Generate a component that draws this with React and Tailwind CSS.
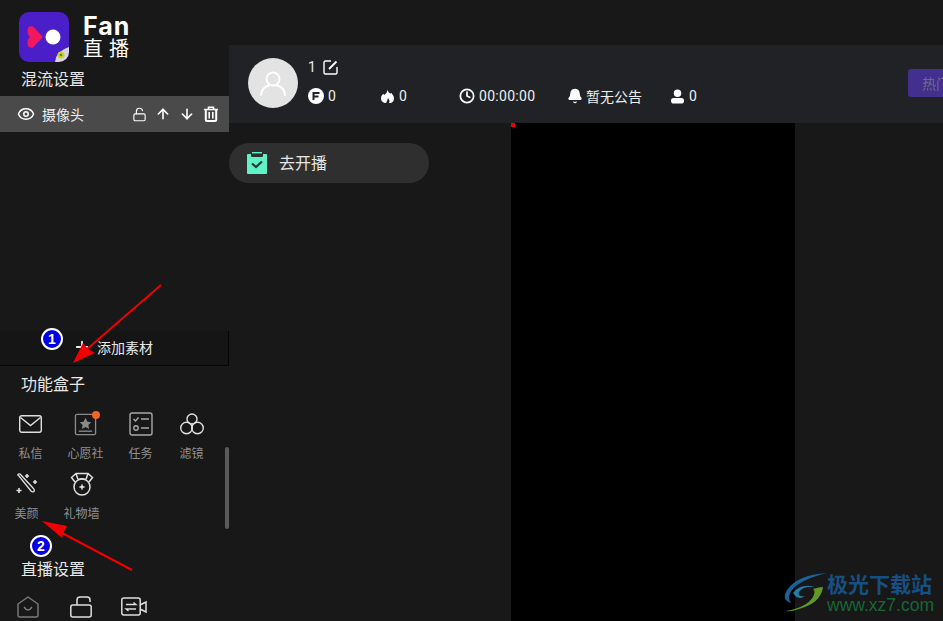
import React from 'react';
import { Eye, LockOpen, ArrowUp, ArrowDown, Clock, Bell, Plus } from 'lucide-react';

const cjk = 'font-["Noto_Sans_CJK_SC","Noto_Sans",sans-serif]';

function Logo() {
  return (
    <div className="flex items-center gap-[14px] pl-[19px] pt-[12px]">
      <div className="relative w-[50px] h-[50px] rounded-[10px] bg-[#4a1fc9] overflow-hidden">
        <svg viewBox="0 0 50 50" className="w-[50px] h-[50px]">
          <path d="M24 25 L14 35.5 Q8.5 37 8.5 31 Q8.5 27 11 25 Q8.5 23 8.5 19 Q8.5 13 14 14.5Z" fill="#f0195f" />
          <circle cx="34" cy="25" r="7.5" fill="#fff" />
          <path d="M36 50 Q37 39 50 35 V50Z" fill="#d8d4e6" />
          <circle cx="42" cy="43" r="3.5" fill="#d6d01c" />
          <circle cx="42" cy="43" r="1.3" fill="#1c9a6a" />
        </svg>
      </div>
      <div className="flex flex-col text-white">
        <span className="font-['Inter',sans-serif] font-bold text-[25px] leading-[22px] tracking-[1px]">Fan</span>
        <span className={`${cjk} text-[20px] leading-[22px] tracking-[6px] whitespace-nowrap`}>直播</span>
      </div>
    </div>
  );
}

function SectionTitle({ children, className = '' }) {
  return <div className={`${cjk} text-[16px] leading-[20px] text-[#e8e8e8] pl-[21px] ${className}`}>{children}</div>;
}

function BoxIcon({ label, children, dot, className = 'w-[55px]' }) {
  return (
    <div className={`relative flex flex-col items-center h-[60px] shrink-0 ${className}`}>
      <div className="h-[32px] w-[32px] flex items-center justify-center text-[#e0e0e0]">{children}</div>
      <span className={`${cjk} mt-[5px] text-[12px] leading-[16px] text-[#8f8f8f] whitespace-nowrap`}>{label}</span>
      {dot && <span className="absolute top-[3px] right-[13px] w-[8px] h-[8px] rounded-full bg-[#f2632b]" />}
    </div>
  );
}

function Sidebar() {
  return (
    <aside className="w-[229px] h-[621px] shrink-0 flex flex-col overflow-hidden relative">
      <Logo />
      <SectionTitle className="mt-[6px]">混流设置</SectionTitle>
      <div className="mt-[8px] h-[36px] shrink-0 bg-[#4a4a4a] flex items-center pl-[17px] pr-[10px] text-white">
        <Eye size={18} strokeWidth={2} />
        <span className={`${cjk} ml-[7px] text-[14px] text-[#eee]`}>摄像头</span>
        <div className="ml-auto flex items-center gap-[8px]">
          <LockOpen size={15} strokeWidth={1.8} />
          <ArrowUp size={16} strokeWidth={2.4} />
          <ArrowDown size={16} strokeWidth={2.4} />
          <svg viewBox="0 0 16 16" className="w-[16px] h-[16px]" fill="none" stroke="#fff">
            <path d="M1 3.5 H15 M5.5 3 V1.2 H10.5 V3" strokeWidth="1.6" />
            <path d="M2.8 4 V14 Q2.8 15 4 15 H12 Q13.2 15 13.2 14 V4" strokeWidth="2" />
            <path d="M6.2 6 V12.5 M9.8 6 V12.5" strokeWidth="1.6" />
          </svg>
        </div>
      </div>
      <div className="h-[199px] shrink-0" />
      <div className="h-[35px] shrink-0 bg-[#151515] border-r border-b border-[#050505] flex items-center pl-[73px] text-[#e8e8e8]">
        <Plus size={18} strokeWidth={2.4} className="-translate-y-[1px]" />
        <span className={`${cjk} ml-[6px] text-[14px] -translate-y-[1px]`}>添加素材</span>
      </div>
      <SectionTitle className="mt-[7px] shrink-0">功能盒子</SectionTitle>
      <div className="relative mt-[15px] h-[120px] shrink-0">
        <div className="flex pl-[3px]">
          <BoxIcon label="私信">
            <svg viewBox="0 0 23 18" className="w-[23px] h-[18px]" fill="none" stroke="currentColor" strokeWidth="1.4">
              <rect x="0.7" y="0.7" width="21.6" height="16.6" rx="2" />
              <path d="M1.5 2.5 L11.5 10.5 L21.5 2.5" />
            </svg>
          </BoxIcon>
          <BoxIcon label="心愿社" dot>
            <svg viewBox="0 0 24 24" className="w-[23px] h-[23px]" fill="none" stroke="#8a8a8a" strokeWidth="1.4">
              <rect x="1.5" y="1.5" width="21" height="21" rx="1.5" />
              <path d="M12 5 L14 9.2 L18 9.7 L15 12.6 L15.8 16.6 L12 14.7 L8.2 16.6 L9 12.6 L6 9.7 L10 9.2Z" fill="#8a8a8a" stroke="none" />
              <path d="M5 19 H19" />
            </svg>
          </BoxIcon>
          <BoxIcon label="任务">
            <svg viewBox="0 0 24 24" className="w-[24px] h-[24px]" fill="none" stroke="#a8a8a8" strokeWidth="1.4">
              <rect x="1" y="1" width="22" height="22" rx="2" />
              <path d="M4.5 7 L6.5 9 L9.5 5.5 M12 7 H20 M12 16 H20" />
              <circle cx="7" cy="16" r="2.2" />
            </svg>
          </BoxIcon>
          <BoxIcon label="滤镜" className="w-[47px]">
            <svg viewBox="0 0 24 22" className="w-[24px] h-[22px]" fill="none" stroke="currentColor" strokeWidth="1.4">
              <circle cx="12" cy="6" r="5" />
              <circle cx="6.5" cy="15" r="5.8" />
              <circle cx="17.5" cy="15" r="5.8" />
            </svg>
          </BoxIcon>
        </div>
        <div className="flex -ml-[1px]">
          <BoxIcon label="美颜">
            <svg viewBox="0 0 22 22" className="w-[22px] h-[22px]" fill="none" stroke="currentColor" strokeWidth="1.3">
              <path d="M3 3 Q1 1.5 2.5 1 Q4 0.5 5 2 L17 15 Q19 17 18 18.5 Q16.5 19.5 15 18 L3 3Z" />
              <path d="M11 1 v4 M9 3 h4 M19 7 v4 M17 9 h4 M3 15 v5 M0.5 17.5 h5" strokeWidth="1.6" />
            </svg>
          </BoxIcon>
          <BoxIcon label="礼物墙">
            <svg viewBox="0 0 24 24" className="w-[24px] h-[24px]" fill="none" stroke="currentColor" strokeWidth="1.5">
              <circle cx="12" cy="15" r="8" />
              <path d="M5 10 L1.5 5.5 L6 1.5 H18 L22.5 5.5 L19 10 M8 7.5 L6 1.5 M16 7.5 L18 1.5 M8.5 7.5 Q12 6 15.5 7.5" />
              <path d="M12 11.5 L13 14 L15.5 15 L13 16 L12 18.5 L11 16 L8.5 15 L11 14Z" fill="currentColor" stroke="none" />
            </svg>
          </BoxIcon>
        </div>
        <div className="absolute right-[0px] top-[39px] w-[4px] h-[82px] rounded-full bg-[#5a5a5a]" />
      </div>
      <SectionTitle className="mt-[30px] shrink-0">直播设置</SectionTitle>
      <div className="mt-[18px] flex pl-[17px] items-start text-[#dedede]">
        <svg viewBox="0 0 22 22" className="w-[22px] h-[22px] shrink-0" fill="none" stroke="#7c7c7c" strokeWidth="1.4">
          <path d="M1 8 L11 1 L21 8 V19 Q21 21 19 21 H3 Q1 21 1 19Z" />
          <path d="M7 11 Q11 17 15 11" />
        </svg>
        <svg viewBox="0 0 22 22" className="w-[22px] h-[22px] ml-[31px] shrink-0" fill="none" stroke="currentColor" strokeWidth="1.5">
          <rect x="0.8" y="9" width="20.4" height="12" rx="2" />
          <path d="M7 9 V4 Q7 1 10 1 H17 Q20 1 20 4 V6" />
        </svg>
        <svg viewBox="0 0 26 20" className="w-[26px] h-[20px] ml-[29px] mt-[1px] shrink-0" fill="none" stroke="currentColor" strokeWidth="1.5">
          <rect x="0.8" y="1" width="18.4" height="17" rx="2" />
          <path d="M19 8 L25 5 V15 L19 12" />
          <path d="M5 7.5 H15 L12.5 5.5 M15 12 H5 L7.5 14" strokeWidth="1.3" />
        </svg>
      </div>
    </aside>
  );
}

function Stat({ icon, value, className = '', valueClass = '' }) {
  return (
    <div className={`flex items-center shrink-0 ${className}`}>
      {icon}
      <span className={`font-['Roboto',sans-serif] text-[14px] leading-[16px] text-[#eee] ml-[4px] ${valueClass}`}>{value}</span>
    </div>
  );
}

function Header() {
  return (
    <header className="h-[78px] shrink-0 bg-[#212226] flex relative">
      <div className="ml-[19px] mt-[13px] w-[50px] h-[50px] rounded-full bg-[#e3e3e3] flex items-center justify-center">
        <svg viewBox="0 0 28 28" className="w-[28px] h-[28px]" fill="none" stroke="#fff" strokeWidth="2" strokeLinecap="round">
          <circle cx="14" cy="10" r="6.5" />
          <path d="M2 26 Q3 18 10 16.5 M26 26 Q25 18 18 16.5" />
        </svg>
      </div>
      <div className="ml-[10px] mt-[13px] flex flex-col">
        <div className="flex items-center h-[18px]">
          <span className="font-['Roboto',sans-serif] text-[14px] text-[#eee]">1</span>
          <svg viewBox="0 0 15 15" className="w-[15px] h-[15px] ml-[7px]" fill="none" stroke="#fff">
            <path d="M8 1 H2.5 Q1 1 1 2.5 V12.5 Q1 14 2.5 14 H12.5 Q14 14 14 12.5 V7" strokeWidth="1.4" />
            <path d="M6 9 L13.5 1.5" strokeWidth="1.8" />
          </svg>
        </div>
        <div className="flex items-center mt-[11px] h-[18px]">
          <Stat
            className="w-[72px]"
            value="0"
            icon={
              <span className="w-[16px] h-[16px] rounded-full bg-white flex items-center justify-center">
                <svg viewBox="0 0 10 10" className="w-[10px] h-[10px]">
                  <path d="M1.5 1 H8.5 V3 H3.5 V4.5 H7.5 V6.5 H3.5 V9 H1.5Z" fill="#212226" />
                </svg>
              </span>
            }
          />
          <Stat
            className="w-[79px]"
            value="0"
            icon={
              <svg viewBox="0 0 16 16" className="w-[15px] h-[15px]">
                <path d="M8 1 Q9 4 11 5 L12 4 Q15 7.5 15 10 Q14.5 15 9.5 15 Q11 12 8.5 9.5 Q8 12 6.5 15 Q1.5 14.5 1 10 Q1 7 3.5 5 L4.5 6.5 Q7.5 5 8 1Z" fill="#fff" />
              </svg>
            }
          />
          <Stat
            className="w-[108px]"
            value="00:00:00"
            valueClass="tracking-[0.3px]"
            icon={<Clock size={16} strokeWidth={2.6} className="text-white" />}
          />
          <div className="flex items-center w-[103px] shrink-0">
            <Bell size={16} fill="#fff" className="text-white" />
            <span className={`${cjk} ml-[3px] text-[14px] text-[#eee]`}>暂无公告</span>
          </div>
          <Stat
            value="0"
            icon={
              <svg viewBox="0 0 16 16" className="w-[15px] h-[15px]">
                <circle cx="8" cy="4.5" r="4" fill="#fff" />
                <rect x="1" y="9.5" width="14" height="6" rx="3" fill="#fff" />
              </svg>
            }
          />
        </div>
      </div>
      <div className="absolute left-[679px] top-[24px] w-[60px] h-[28px] rounded-l-[3px] bg-[#422f8e] flex items-center pl-[14px]">
        <span className={`${cjk} text-[14px] text-[#6f6a8e] whitespace-nowrap`}>热门</span>
      </div>
    </header>
  );
}

function Annotations() {
  return (
    <div className="absolute inset-0 pointer-events-none">
      <svg viewBox="0 0 943 621" className="absolute inset-0 w-[943px] h-[621px]">
        <path d="M161 285 L86 350" stroke="#f00000" strokeWidth="2" fill="none" />
        <path d="M73 363 L83 343 L88 349 L95 353Z" fill="#f00000" />
        <path d="M132 570 L62 533" stroke="#f00000" strokeWidth="2.2" fill="none" />
        <path d="M42 521 L67 526 L63 533 L62 538Z" fill="#f00000" />
        <rect x="511" y="123" width="4" height="4" fill="#f00000" />
      </svg>
      <span className="absolute left-[41px] top-[328px] w-[22px] h-[22px] rounded-full bg-[#0000e6] border-[2px] border-white flex items-center justify-center text-white text-[14px] leading-none font-bold font-['Liberation_Sans',sans-serif]">1</span>
      <span className="absolute left-[30px] top-[535px] w-[22px] h-[22px] rounded-full bg-[#0000e6] border-[2px] border-white flex items-center justify-center text-white text-[14px] leading-none font-bold font-['Liberation_Sans',sans-serif]">2</span>
    </div>
  );
}

function Watermark() {
  return (
    <div className="absolute left-[783px] top-[571px] flex items-center opacity-90">
      <svg viewBox="0 0 44 40" className="w-[44px] h-[40px] shrink-0">
        <path d="M44 0 Q14 2 4 17 Q-2 27 8 30 Q2 22 14 12 Q26 4 44 0Z" fill="#1d6ca8" />
        <path d="M10 20 Q18 10 32 14 Q20 13 16 19 Q14 24 22 23 Q15 28 10 20Z" fill="#2a87b8" />
        <path d="M40 14 Q38 30 16 36 Q8 39 3 38 Q24 34 30 24 Q33 18 30 16 Q36 14 40 14Z" fill="#6aa52c" />
      </svg>
      <div className="flex flex-col">
        <span className={`${cjk} text-[21px] leading-[24px] font-bold text-[#17568f] whitespace-nowrap`}>极光下载站</span>
        <span className="font-['Liberation_Sans',sans-serif] text-[17.5px] leading-[20px] text-[#176f3c] whitespace-nowrap">www.xz7.com</span>
      </div>
    </div>
  );
}

export default function App() {
  return (
    <div className="relative w-[943px] h-[621px] overflow-hidden bg-[#181818] flex">
      <Sidebar />
      <main className="flex-1 flex flex-col pt-[45px] min-w-0">
        <Header />
        <div className="flex flex-1 min-h-0">
          <div className="w-[282px] shrink-0 pt-[20px]">
            <div className="w-[200px] h-[40px] rounded-full bg-[#2f2f2f] flex items-center pl-[18px]">
              <svg viewBox="0 0 20 22" className="w-[20px] h-[22px] shrink-0">
                <path d="M1 2 H19 Q20 2 20 3 V21 Q20 22 19 22 H1 Q0 22 0 21 V3 Q0 2 1 2Z" fill="#5ff2c4" />
                <path d="M4 0 H16 V4 Q16 5 15 5 H5 Q4 5 4 4Z" fill="#2f2f2f" />
                <path d="M5 0.7 H15" stroke="#5ff2c4" strokeWidth="1.4" />
                <path d="M5 11.5 L9 15 L15 9.5" fill="none" stroke="#2a3a36" strokeWidth="2.2" />
              </svg>
              <span className={`${cjk} ml-[12px] text-[16px] text-[#e6e6e6] -translate-y-[1px]`}>去开播</span>
            </div>
          </div>
          <div className="w-[284px] shrink-0 bg-black" />
        </div>
      </main>
      <Annotations />
      <Watermark />
    </div>
  );
}
